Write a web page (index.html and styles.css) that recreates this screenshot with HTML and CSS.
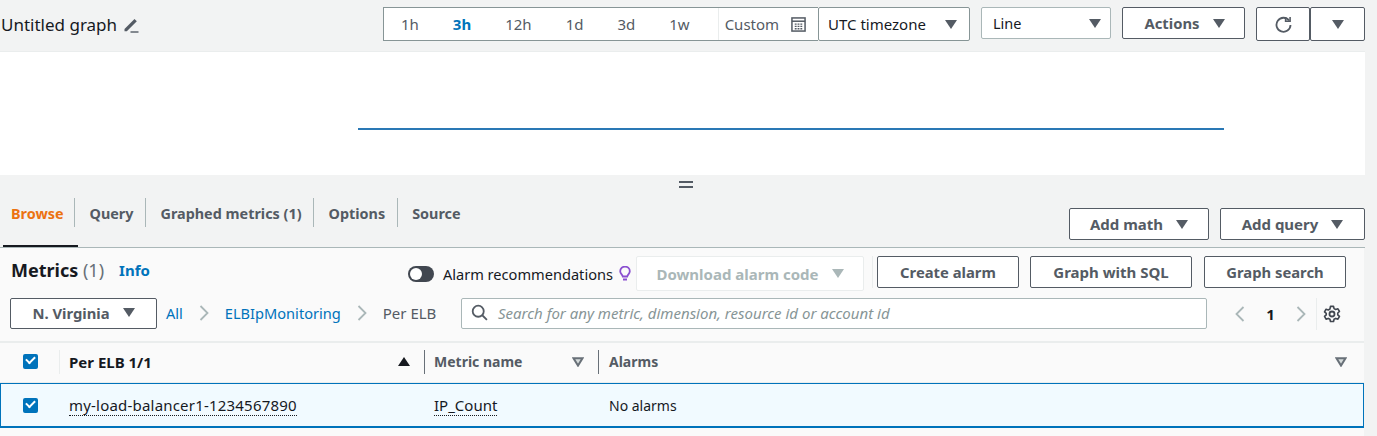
FILE: index.html
```html
<!DOCTYPE html>
<html>

<head>
    <meta charset="utf-8">
    <title>Untitled graph - Metrics</title>
    <link rel="stylesheet" href="styles.css">
</head>

<body>
    <div class="page">
        <header class="toolbar">
            <div class="graph-title">
                <span>Untitled graph</span>
                <svg class="pencil" viewBox="0 0 16 16" width="16" height="16">
                    <path d="M1.5 12 L11.5 2 L13.8 4.3 L3.8 14.3 H1.5 Z" fill="#545b64"/>
                    <path d="M7.5 15 H15.5" stroke="#545b64" stroke-width="1.4"/>
                </svg>
            </div>
            <div class="range">
                <a class="range-item">1h</a>
                <a class="range-item range-active">3h</a>
                <a class="range-item">12h</a>
                <a class="range-item">1d</a>
                <a class="range-item">3d</a>
                <a class="range-item">1w</a>
                <a class="range-custom">Custom
                    <svg viewBox="0 0 16 16" width="15" height="15">
                        <rect x="1" y="1" width="14" height="14" fill="none" stroke="#545b64" stroke-width="1.6"/>
                        <path d="M1 4.5 H15" stroke="#545b64" stroke-width="1.6"/>
                        <path d="M4 7.5h2M7 7.5h2M10 7.5h2M4 10h2M7 10h2M10 10h2M4 12.5h2M7 12.5h2M10 12.5h2" stroke="#545b64" stroke-width="1.4"/>
                    </svg>
                </a>
            </div>
            <div class="select select-tz">UTC timezone <i class="caret"></i></div>
            <div class="select select-type">Line <i class="caret"></i></div>
            <button class="btn btn-actions">Actions <i class="caret"></i></button>
            <div class="btn-group">
                <button class="btn btn-refresh">
                    <svg viewBox="0 0 16 16" width="17" height="17">
                        <path d="M13.2 4.2 A6.6 6.6 0 1 0 14.6 8.5" fill="none" stroke="#545b64" stroke-width="1.7"/>
                        <path d="M10 1 V5 H14.2 V1" fill="none" stroke="#545b64" stroke-width="1.5"/>
                    </svg>
                </button>
                <button class="btn btn-more"><i class="caret"></i></button>
            </div>
        </header>

        <section class="graph">
            <div class="graph-line"></div>
        </section>

        <div class="drag-handle"></div>

        <div class="tabs-row">
            <nav class="tabs">
                <a class="tab tab-active">Browse</a>
                <a class="tab">Query</a>
                <a class="tab">Graphed metrics (1)</a>
                <a class="tab">Options</a>
                <a class="tab">Source</a>
            </nav>
            <div class="tabs-actions">
                <button class="btn btn-math">Add math <i class="caret"></i></button>
                <button class="btn btn-query">Add query <i class="caret"></i></button>
            </div>
        </div>

        <section class="panel">
            <div class="panel-head">
                <h2>Metrics <span>(1)</span></h2>
                <a class="info">Info</a>
                <div class="panel-actions">
                    <i class="toggle"></i>
                    <span class="toggle-label">Alarm recommendations</span>
                    <svg class="bulb" viewBox="0 0 12 16" width="12" height="16">
                        <path d="M3.8 10.5 C3.5 8.5 1.2 7.8 1.2 5.2 A4.8 4.6 0 0 1 10.8 5.2 C10.8 7.8 8.5 8.5 8.2 10.5 Z" fill="none" stroke="#8a4fd0" stroke-width="1.8"/>
                        <path d="M4 13.5 H8" stroke="#8a4fd0" stroke-width="2"/>
                    </svg>
                    <button class="btn btn-download">Download alarm code <i class="caret"></i></button>
                    <i class="divider"></i>
                    <button class="btn btn-alarm">Create alarm</button>
                    <button class="btn btn-sql">Graph with SQL</button>
                    <button class="btn btn-search">Graph search</button>
                </div>
            </div>

            <div class="panel-filter">
                <button class="btn btn-region">N. Virginia <i class="caret"></i></button>
                <nav class="crumbs">
                    <a>All</a>
                    <svg class="chevron" viewBox="0 0 10 16" width="10" height="16"><path d="M1.5 1 L8.5 8 L1.5 15" /></svg>
                    <a>ELBIpMonitoring</a>
                    <svg class="chevron" viewBox="0 0 10 16" width="10" height="16"><path d="M1.5 1 L8.5 8 L1.5 15" /></svg>
                    <span>Per ELB</span>
                </nav>
                <div class="search">
                    <svg viewBox="0 0 16 16" width="17" height="17">
                        <circle cx="6.8" cy="6.8" r="5.2" fill="none" stroke="#545b64" stroke-width="1.7"/>
                        <path d="M10.6 10.6 L15 15" stroke="#545b64" stroke-width="1.7"/>
                    </svg>
                    <span>Search for any metric, dimension, resource id or account id</span>
                </div>
                <div class="pager">
                    <svg class="chevron" viewBox="0 0 10 16" width="10" height="16"><path d="M8.5 1 L1.5 8 L8.5 15" /></svg>
                    <b>1</b>
                    <svg class="chevron" viewBox="0 0 10 16" width="10" height="16"><path d="M1.5 1 L8.5 8 L1.5 15" /></svg>
                </div>
                <i class="divider divider-pager"></i>
                <svg class="gear" viewBox="0 0 20 20" width="18" height="18">
                    <circle cx="10" cy="10" r="2.8" fill="none" stroke="#414750" stroke-width="2"/>
                    <path d="M8.3 1.5h3.4l.6 2.5 1.8 1 2.5-.8 1.7 3-1.9 1.7v2.1l1.9 1.7-1.7 3-2.5-.8-1.8 1-.6 2.5H8.3l-.6-2.5-1.8-1-2.5.8-1.7-3 1.9-1.7V9.4L1.7 7.7l1.7-3 2.5.8 1.8-1z" fill="none" stroke="#414750" stroke-width="1.8" stroke-linejoin="round"/>
                </svg>
            </div>

            <div class="table-head">
                <div class="cell cell-check"><i class="check"></i></div>
                <div class="cell cell-name"><b>Per ELB 1/1</b><i class="sort-up"></i></div>
                <div class="cell cell-sep"><b class="muted">Metric name</b>
                    <svg class="sort-down" viewBox="0 0 12 10" width="12" height="10"><path d="M1.5 1.2 H10.5 L6 8.6 Z" /></svg>
                </div>
                <div class="cell cell-sep cell-wide"><b class="muted">Alarms</b>
                    <svg class="sort-down" viewBox="0 0 12 10" width="12" height="10"><path d="M1.5 1.2 H10.5 L6 8.6 Z" /></svg>
                </div>
            </div>
            <div class="table-row">
                <div class="cell cell-check"><i class="check"></i></div>
                <div class="cell cell-name"><span class="dotted balancer">my-load-balancer1-1234567890</span></div>
                <div class="cell cell-metric"><span class="dotted">IP_Count</span></div>
                <div class="cell cell-alarms">No alarms</div>
            </div>
        </section>
    </div>
</body>

</html>
```

FILE: styles.css
```css
html {
    height: 100%;
    font-family: "Noto Sans", "Liberation Sans", sans-serif;
    font-size: 14px;
    color: #16191f;
}

body {
    margin: 0;
    height: 436px;
    overflow: hidden;
    background-color: #f2f3f3;
}

.page {
    width: 1365px;
}

button {
    font-family: inherit;
}

.caret {
    display: inline-block;
    flex: none;
    width: 0;
    height: 0;
    border-left: 6.5px solid transparent;
    border-right: 6.5px solid transparent;
    border-top: 9px solid #545b64;
}

.btn {
    display: flex;
    align-items: center;
    justify-content: center;
    gap: 13px;
    height: 32px;
    padding: 0;
    box-sizing: border-box;
    background-color: #fff;
    border: 1px solid #545b64;
    border-radius: 2px;
    font-size: 14.8px;
    font-weight: 700;
    color: #545b64;
}

.divider {
    display: block;
    width: 1px;
    height: 32px;
    background-color: #eaeded;
}

/* top bar */
.toolbar {
    display: flex;
    align-items: flex-start;
    height: 52px;
    padding-top: 7px;
    box-sizing: border-box;
    border-bottom: 1px solid #eaeded;
}

.graph-title {
    display: flex;
    align-items: center;
    gap: 6px;
    flex: 1;
    height: 34px;
    padding: 1px 0 0 1px;
    box-sizing: border-box;
    font-size: 17px;
}

.range {
    display: flex;
    align-items: center;
    width: 435px;
    height: 34px;
    box-sizing: border-box;
    background-color: #fff;
    border: 1px solid #879596;
    border-right: 0;
    color: #545b64;
}

.range-item {
    padding: 0 17px;
    font-size: 15px;
}

.range-active {
    font-weight: 700;
    color: #0073bb;
}

.range-custom {
    display: flex;
    align-items: center;
    gap: 12px;
    height: 100%;
    margin-left: 11px;
    padding-left: 6px;
    border-left: 1px solid #eaeded;
    font-size: 15px;
}

.select {
    display: flex;
    align-items: center;
    justify-content: space-between;
    height: 34px;
    box-sizing: border-box;
    background-color: #fff;
    border: 1px solid #879596;
    border-radius: 2px;
    font-size: 15px;
}

.select-tz {
    width: 152px;
    padding: 0 12px 0 9px;
}

.select-type {
    width: 130px;
    height: 32px;
    margin-left: 11px;
    padding: 0 9px 0 11px;
    border-color: #aab7b8;
    font-size: 14.5px;
}

.btn-actions {
    width: 123px;
    margin-left: 11px;
    padding-left: 2px;
}

.btn-group {
    display: flex;
    margin-left: 11px;
}

.btn-refresh {
    width: 54px;
    height: 34px;
}

.btn-more {
    width: 55px;
    height: 34px;
}

/* graph */
.graph {
    display: flex;
    align-items: flex-end;
    height: 123px;
    padding: 0 141px 0 358px;
    box-sizing: border-box;
    background-color: #fff;
}

.graph-line {
    flex: 1;
    height: 2px;
    margin-bottom: 45px;
    background-color: #2a78b5;
}

.drag-handle {
    position: relative;
    left: 3px;
    width: 14px;
    height: 7px;
    margin: 6px auto 0;
    box-sizing: border-box;
    border-top: 2px solid #545b64;
    border-bottom: 2px solid #545b64;
}

/* tabs */
.tabs-row {
    display: flex;
    justify-content: space-between;
    height: 60px;
    box-sizing: border-box;
    border-bottom: 1px solid #aab7b8;
}

.tabs {
    display: flex;
    align-items: flex-start;
    padding: 10px 0 0 3px;
}

.tab {
    height: 29px;
    padding: 0 11.5px 0 14.5px;
    line-height: 31px;
    border-left: 1px solid #aab7b8;
    font-size: 14.4px;
    font-weight: 700;
    color: #545b64;
}

.tab-active {
    position: relative;
    width: 71px;
    box-sizing: border-box;
    padding: 0 0 0 8px;
    border-left: 0;
    color: #ec7211;
}

.tab-active::after {
    content: "";
    position: absolute;
    left: 0;
    top: 47px;
    width: 75px;
    height: 2px;
    background-color: #16191f;
}

.tabs-actions {
    display: flex;
    gap: 11px;
    padding-top: 20px;
}

.btn-math {
    width: 140px;
    font-size: 15px;
}

.btn-query {
    width: 145px;
    font-size: 15px;
}

/* metrics panel */
.panel {
    width: 1364px;
    height: 188px;
    background-color: #fafafa;
}

.panel-head {
    display: flex;
    align-items: flex-start;
    height: 50px;
    padding: 8px 18px 0 11px;
    box-sizing: border-box;
}

.panel-head h2 {
    margin: 0;
    font-size: 18px;
    line-height: 29px;
}

.panel-head h2 span {
    font-weight: 400;
    color: #687078;
}

.info {
    margin-left: 15px;
    font-size: 15px;
    font-weight: 700;
    line-height: 29px;
    color: #0073bb;
}

.panel-actions {
    display: flex;
    align-items: center;
    height: 35px;
    margin-left: auto;
}

.toggle {
    display: block;
    position: relative;
    width: 26px;
    height: 16px;
    border-radius: 8px;
    background-color: #414750;
}

.toggle::after {
    content: "";
    position: absolute;
    left: 2px;
    top: 2px;
    width: 12px;
    height: 12px;
    border-radius: 50%;
    background-color: #fff;
}

.toggle-label {
    margin-left: 9px;
    font-size: 14.6px;
}

.bulb {
    margin-left: 6px;
}

.btn-download {
    width: 228px;
    height: 35px;
    margin-left: 5px;
    border-color: #eaeded;
    font-size: 15px;
    color: #aab7b8;
}

.btn-download .caret {
    border-top-color: #aab7b8;
}

.panel-actions .divider {
    align-self: flex-start;
    margin: 0 4px 0 8px;
}

.btn-alarm,
.btn-sql,
.btn-search {
    align-self: flex-start;
}

.btn-alarm {
    width: 142px;
}

.btn-sql {
    width: 162px;
    margin-left: 11px;
    font-size: 15px;
}

.btn-search {
    width: 142px;
    margin-left: 12px;
}

.panel-filter {
    display: flex;
    align-items: center;
    height: 31px;
    padding: 0 23px 0 10px;
}

.btn-region {
    width: 147px;
    height: 31px;
    padding-bottom: 2px;
}

.crumbs {
    display: flex;
    align-items: center;
    gap: 16px;
    width: 304px;
    padding: 0 0 2px 9px;
    box-sizing: border-box;
    color: #545b64;
    font-size: 14.6px;
}

.crumbs a {
    color: #0073bb;
}

.crumbs span {
    font-size: 15px;
}

.chevron {
    flex: none;
}

.chevron path {
    fill: none;
    stroke: #aab7b8;
    stroke-width: 1.8;
}

.search {
    display: flex;
    align-items: center;
    gap: 10px;
    flex: 1;
    height: 31px;
    padding: 0 0 2px 9px;
    box-sizing: border-box;
    background-color: #fff;
    border: 1px solid #aab7b8;
    border-radius: 2px;
    font-size: 15px;
    font-style: italic;
    color: #879596;
}

.pager {
    display: flex;
    align-items: center;
    justify-content: space-between;
    width: 71px;
    margin-left: 28px;
    font-size: 15px;
}

.divider-pager {
    margin: 0 6px 0 10px;
}

/* table */
.table-head,
.table-row {
    display: grid;
    grid-template-columns: 59px 365px 174px 1fr;
    align-items: center;
    box-sizing: border-box;
}

.table-head {
    height: 42px;
    margin-top: 12px;
    padding-bottom: 2px;
    border-top: 2px solid #eaeded;
    border-bottom: 1px solid #eaeded;
}

.table-row {
    height: 45px;
    background-color: #f1faff;
    border: 1px solid #0073bb;
    border-bottom-width: 2px;
}

.cell {
    display: flex;
    align-items: center;
    justify-content: space-between;
}

.cell-check {
    justify-content: flex-start;
    padding-left: 23px;
}

.table-row .cell-check {
    padding-left: 22px;
}

.check {
    display: block;
    position: relative;
    width: 15px;
    height: 15px;
    border-radius: 2px;
    background-color: #0073bb;
}

.check::after {
    content: "";
    position: absolute;
    left: 3px;
    top: 2px;
    width: 7px;
    height: 4px;
    border-left: 2px solid #fff;
    border-bottom: 2px solid #fff;
    transform: rotate(-45deg);
}

.cell-name {
    padding: 0 14px 0 9px;
}

.table-head .cell-name {
    height: 24px;
    border-left: 1px solid #eaeded;
    font-size: 15px;
}

.cell-sep {
    height: 24px;
    padding: 0 14px 0 9px;
    border-left: 1px solid #687078;
}

.cell-sep.cell-wide {
    padding: 0 17px 0 10px;
}

.cell-metric {
    padding-left: 9px;
    font-size: 15px;
}

.cell-alarms {
    padding-left: 10px;
}

.muted {
    color: #545b64;
}

.sort-up {
    display: block;
    width: 0;
    height: 0;
    border-left: 6px solid transparent;
    border-right: 6px solid transparent;
    border-bottom: 9px solid #16191f;
}

.sort-down path {
    fill: #d5dbdb;
    stroke: #687078;
    stroke-width: 2;
}

.dotted {
    border-bottom: 1px dotted #16191f;
}

.balancer {
    font-size: 15px;
    letter-spacing: 0.2px;
}
```
